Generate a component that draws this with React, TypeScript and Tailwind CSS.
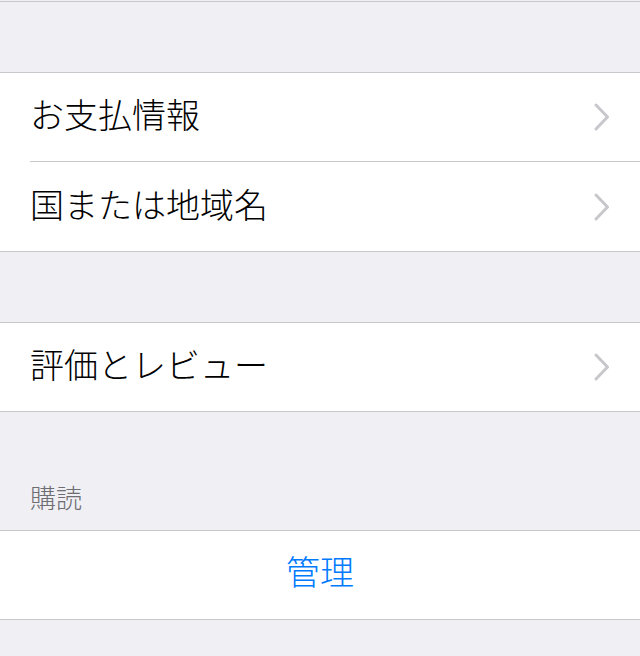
import React from "react";

const font = { fontFamily: '"Noto Sans CJK JP", "Noto Sans", sans-serif' };

function Chevron() {
  return (
    <svg width="16" height="28" viewBox="0 0 16 28" fill="none" className="shrink-0">
      <path d="M2 2 L13.5 14 L2 26" stroke="#c7c7cc" strokeWidth="3" strokeLinecap="round" strokeLinejoin="round" />
    </svg>
  );
}

function Row({ label, last, short }: { label: string; last?: boolean; short?: boolean }) {
  return (
    <div className="pl-[30px]">
      <div
        className={`flex items-center justify-between pr-[30px] ${short ? "h-[88px]" : "h-[89px]"} ${
          last ? "" : "border-b border-[#c8c7cc]"
        }`}
      >
        <span className="pb-[6px] text-[34px] font-light leading-none text-black">{label}</span>
        <Chevron />
      </div>
    </div>
  );
}

export default function App() {
  return (
    <div className="h-[656px] w-[640px] overflow-hidden bg-[#efeff4]" style={font}>
      <div className="pt-[1px]">
        <div className="h-[71px] border-t border-[#c8c7cc]" />
      </div>

      <div className="border-y border-[#c8c7cc] bg-white">
        <Row label="お支払情報" />
        <Row label="国または地域名" last />
      </div>

      <div className="h-[70px]" />

      <div className="border-y border-[#c8c7cc] bg-white">
        <Row label="評価とレビュー" last short />
      </div>

      <div className="flex h-[118px] items-end px-[30px] pb-[20px]">
        <span className="text-[26px] font-light leading-none text-[#6d6d72]">購読</span>
      </div>

      <div className="flex h-[90px] items-center justify-center border-y border-[#c8c7cc] bg-white">
        <span className="pb-[8px] text-[34px] font-light leading-none text-[#007aff]">管理</span>
      </div>
    </div>
  );
}
